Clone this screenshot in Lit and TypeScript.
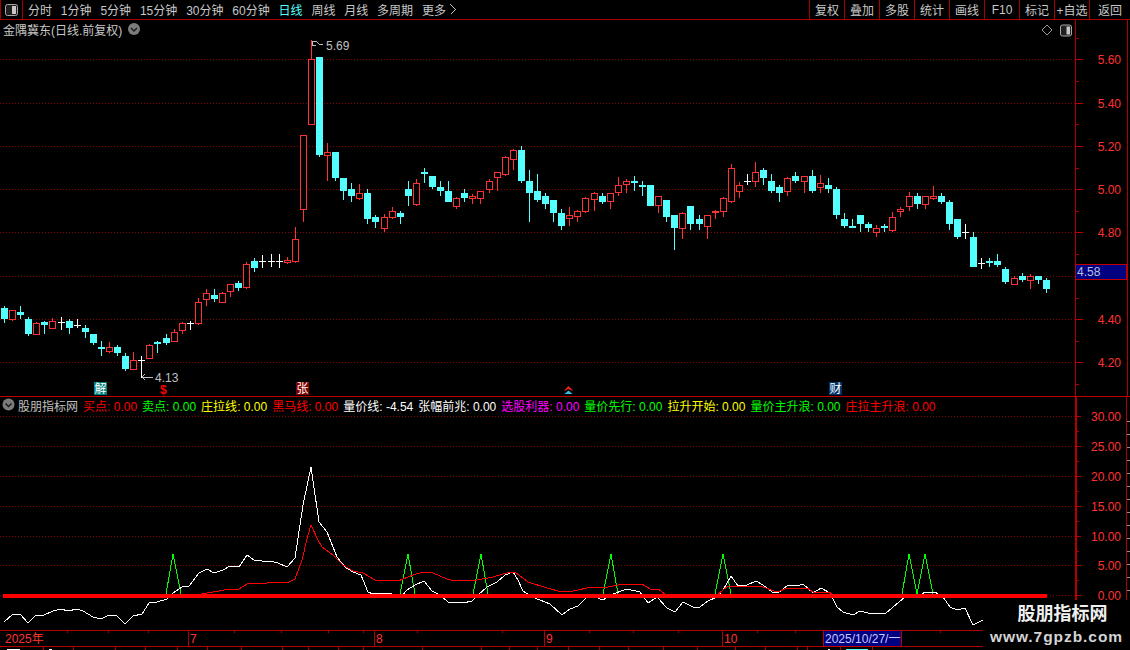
import { LitElement, html, css, svg } from "lit";
import { customElement } from "lit/decorators.js";

type Candle = [string, number, number, number, number];
const C: Candle[] = [
["C",306,308,319,323],["R",310,310,320,321],["C",306,312,315,319],["C",317,319,334,336],["R",322,323,335,335],
["C",321,322,325,334],["R",318,321,329,329],["W",317,322,323,330],["C",319,321,328,334],["W",319,325,326,328],
["C",325,328,332,338],["C",334,334,343,345],["C",341,347,349,356],["R",342,347,352,353],["C",345,347,353,356],
["C",353,356,369,371],["R",352,360,370,370],["W",356,360,361,378],["R",344,345,359,359],["C",341,342,344,353],
["C",334,338,343,345],["R",329,332,342,342],["R",322,323,331,334],["W",321,323,324,330],["R",298,302,324,325],
["R",289,293,300,306],["C",289,295,299,302],["R",292,293,303,303],["R",284,284,292,297],["C",281,283,288,291],
["R",262,264,288,289],["C",258,261,268,272],["W",255,261,262,268],["W",254,261,262,267],["W",254,261,262,268],
["R",257,260,263,264],["R",227,239,262,263],["R",135,135,210,222],["R",40,59,125,125],["C",57,57,155,157],
["R",143,152,156,181],["C",152,152,178,181],["C",178,178,191,200],["C",183,189,196,202],["R",184,193,199,200],
["C",189,193,219,224],["C",215,217,222,228],["R",214,217,229,232],["R",207,211,218,219],["C",211,213,217,224],
["C",181,189,196,206],["R",179,183,205,206],["C",168,172,174,183],["C",176,176,187,189],["C",181,187,191,196],
["C",181,191,202,202],["R",197,198,207,209],["C",189,193,198,202],["R",194,196,199,204],["R",191,191,199,204],
["R",179,181,190,193],["R",172,172,178,191],["R",156,157,175,176],["R",149,150,160,170],["C",146,150,181,183],
["C",170,181,193,222],["C",174,191,200,202],["C",193,196,204,209],["C",200,200,213,222],["C",209,213,226,230],
["R",207,215,219,226],["R",210,211,217,222],["R",197,198,212,213],["R",192,193,200,211],["C",193,196,202,204],
["R",193,193,202,209],["R",177,185,193,196],["R",179,181,185,193],["C",176,181,183,191],["C",181,185,187,196],
["C",185,185,206,206],["R",196,196,206,213],["C",200,200,217,222],["C",215,215,228,250],["R",212,213,229,239],
["C",206,206,224,230],["C",215,219,224,230],["R",215,215,227,239],["R",210,211,213,219],["R",197,198,212,217],
["R",164,168,202,203],["R",182,185,192,198],["W",174,181,182,185],["R",162,172,182,187],["C",168,170,178,185],
["C",174,181,191,193],["C",185,187,193,202],["R",177,178,192,196],["C",172,176,181,183],["R",176,176,182,193],
["C",170,176,191,193],["R",175,183,188,193],["C",178,185,189,193],["C",187,189,215,219],["C",213,219,226,228],
["C",219,226,228,228],["C",215,215,224,232],["C",222,224,228,232],["R",225,228,233,237],["C",224,226,228,232],
["R",212,217,231,232],["R",207,209,212,217],["R",192,196,207,211],["C",193,196,204,209],["R",196,196,205,209],
["R",186,196,199,200],["C",193,196,202,204],["C",200,202,224,230],["C",219,219,237,239],["W",224,232,233,239],
["C",232,237,267,267],["W",258,263,264,269],["C",258,261,263,267],["C",254,261,265,267],["C",267,269,282,284],
["R",276,278,285,285],["C",273,276,280,282],["R",274,276,281,289],["C",276,276,280,284],["C",278,280,289,293],
];

const WHITE = "4,622 13,614 20,614 28,623 36,615 44,615 53,611 61,609 68,611 77,609 83,611 93,617 101,619 109,615 117,616 125,624 133,616 142,614 149,603 157,602 167,599 173,593 182,587 189,586 199,573 207,569 214,573 223,570 230,566 239,567 247,555 254,560 262,561 270,561 278,563 287,567 295,558 303,505 311,467 319,522 327,532 337,557 345,567 353,572 361,575 368,592 373,594 390,593 397,597 400,598 407,590 415,585 424,581 432,591 440,595 448,602 463,603 472,601 478,595 487,587 497,582 505,575 513,572 518,580 523,591 532,597 540,600 550,604 562,615 570,609 578,606 587,597 595,597 603,600 610,595 627,589 640,592 648,603 657,597 667,608 675,612 683,602 693,607 700,607 708,601 717,597 723,590 731,576 738,586 747,585 756,581 763,585 772,592 778,593 788,585 797,586 803,584 813,593 821,588 830,593 837,607 843,612 853,615 860,611 868,613 886,613 905,597 917,597 925,592 935,592 943,597 950,607 957,610 965,608 973,625 983,620";
const RED = "202,594 213,592 230,589 239,589 247,584 267,583 270,582 287,583 295,579 302,560 308,535 311,525 318,540 322,547 333,555 343,565 353,571 363,573 375,580 398,581 413,575 423,572 433,573 447,579 455,581 477,580 493,577 510,572 515,572 528,582 547,588 562,592 573,591 592,587 603,588 623,584 642,584 650,589 658,589 665,594 717,595 728,586 733,587 760,586 777,592 788,588 807,588 813,592 830,592 832,595";
const SPIKES = [[166,173,181],[400,408,415],[473,481,488],[603,611,618],[715,723,731],[902,909,917],[917,925,933]];

const PRICES: [string, number][] = [["5.60",59],["5.40",103],["5.20",146],["5.00",189],["4.80",232],["4.40",319],["4.20",362]];
const LOWER: [string, number][] = [["30.00",417],["25.00",447],["20.00",477],["15.00",507],["10.00",537],["5.00",566],["0.00",596]];
const TOOLS = ["分时","1分钟","5分钟","15分钟","30分钟","60分钟","日线","周线","月线","多周期"];
const BUTTONS = ["复权","叠加","多股","统计","画线","F10","标记","+自选","返回"];
const LEGEND: [string, string, string][] = [
["买点","0.00","red"],["卖点","0.00","green"],["庄拉线","0.00","yellow"],["黑马线","0.00","red"],["量价线","-4.54","white"],
["张幅前兆","0.00","white"],["选股利器","0.00","magenta"],["量价先行","0.00","green"],["拉升开始","0.00","yellow"],
["量价主升浪","0.00","green"],["庄拉主升浪","0.00","red"],
];
const TOP_TICKS = [67,108,148,234,281,328,363,417,502,589,633,678,757,795,860,940,1010];
const BOT_TICKS = [43,73,115,145,177,207,241,282,308,338,363,422,481,509,537,568,599,628,663,697,735,765,797,807,840,872];

const chevron = (cx: number, cy: number) => svg`
  <circle class="chip" cx=${cx} cy=${cy} r="6"></circle>
  <polyline class="chip-mark" points="${cx - 3},${cy - 1} ${cx},${cy + 2} ${cx + 3},${cy - 1}"></polyline>`;

const candle = (c: Candle, i: number) => {
  const x = Math.floor(4.5 + 8.076 * i);
  const [k, wt, t, b, wb] = c;
  if (k === "R") {
    return svg`
      ${t > wt ? svg`<rect class="red-fill" x=${x} y=${wt} width="1" height=${t - wt}></rect>` : ""}
      ${wb > b ? svg`<rect class="red-fill" x=${x} y=${b} width="1" height=${wb - b}></rect>` : ""}
      <rect class="red-box" x=${x - 2.5} y=${t + 0.5} width="6" height=${Math.max(b - t - 1, 1)}></rect>`;
  }
  const cls = k === "W" ? "white-fill" : "cyan-fill";
  return svg`
    <rect class=${cls} x=${x} y=${wt} width="1" height=${wb - wt}></rect>
    <rect class=${cls} x=${x - 3} y=${t} width="7" height=${b - t}></rect>`;
};

@customElement("app-root")
export class AppRoot extends LitElement {
  static styles = css`
    :host { display: block; width: 1130px; height: 650px; }
    .root { position: relative; width: 1130px; height: 650px; overflow: hidden; background: #000; display: flex; flex-direction: column;
      font: 12px "Liberation Sans", "Noto Sans CJK SC", sans-serif; color: #c8c8c8; }
    .toolbar { height: 19px; flex: none; display: flex; align-items: center; border-bottom: 1px solid #a80000; }
    .panel-btn { width: 23px; height: 19px; box-sizing: border-box; border-left: 1px solid #a80000; border-right: 1px solid #a80000; display: flex; align-items: center; justify-content: center; }
    .tools { display: flex; gap: 8.85px; padding-left: 5px; flex: 1; white-space: nowrap; align-items: center; }
    .active { color: #54ffff; }
    .more { display: flex; align-items: center; gap: 4px; }
    .buttons { display: flex; }
    .btn { width: 35px; height: 19px; box-sizing: border-box; border-left: 1px solid #a80000; display: flex; align-items: center; justify-content: center; white-space: nowrap; }
    .btn.last { width: 41px; }
    .price { position: relative; height: 376px; flex: none; }
    .price-head { position: relative; display: flex; align-items: center; gap: 5px; height: 19px; padding-left: 3px; white-space: nowrap; }
    .chart { position: absolute; left: 0; top: 0; }
    .sep { height: 1px; flex: none; background: #c00000; }
    .lower { position: relative; height: 233px; flex: none; }
    .legend { position: relative; display: flex; align-items: center; height: 17px; gap: 5px; white-space: nowrap; padding-left: 18px; }
    .legend .name { color: #c0c0c0; }
    .red { color: #ff0000; } .green { color: #00ff00; } .yellow { color: #ffff00; } .white { color: #fff; } .magenta { color: #ff00ff; }
    .timeaxis { position: relative; height: 20px; flex: none; }
    .watermark { position: absolute; right: 0; bottom: 0; width: 147px; height: 50px; background: #000; display: flex; flex-direction: column; align-items: center; }
    .wm1 { font-size: 18px; line-height: 28px; font-weight: 700; color: #efefef; margin-left: 12px; }
    .wm2 { font-size: 15.5px; line-height: 18px; font-weight: 700; color: #d4d4d4; letter-spacing: 0.95px; }
    svg text { font: 12px "Liberation Sans", "Noto Sans CJK SC", sans-serif; }
    .grid { stroke: #8a0000; stroke-width: 1; stroke-dasharray: 1 2; shape-rendering: crispEdges; fill: none; }
    .axis { stroke: #b00000; stroke-width: 1; shape-rendering: crispEdges; fill: none; }
    .axis2 { stroke: #b00000; stroke-width: 2; shape-rendering: crispEdges; fill: none; }
    .gtick { stroke: #909090; stroke-width: 1; shape-rendering: crispEdges; }
    .plabel { fill: #ff3232; }
    .gray { fill: #c0c0c0; }
    .gray-line { stroke: #c0c0c0; fill: none; stroke-width: 1; shape-rendering: crispEdges; }
    .red-fill { fill: #ff3232; shape-rendering: crispEdges; }
    .cyan-fill { fill: #54ffff; shape-rendering: crispEdges; }
    .white-fill { fill: #fff; shape-rendering: crispEdges; }
    .red-box { fill: #000; stroke: #ff3232; stroke-width: 1; shape-rendering: crispEdges; }
    .chip { fill: #7c7c7c; }
    .chip-mark { fill: none; stroke: #1c1c1c; stroke-width: 1.5; }
    .ico-frame { fill: #202020; stroke: #a8a8a8; stroke-width: 1; }
    .ico-fill { fill: #c8c8c8; }
    .diamond { fill: none; stroke: #9a9a9a; stroke-width: 1; }
    .line-white { fill: none; stroke: #fff; stroke-width: 1; shape-rendering: crispEdges; }
    .line-red { fill: none; stroke: #ff0000; stroke-width: 1; shape-rendering: crispEdges; }
    .line-green { fill: none; stroke: #00ff00; stroke-width: 1; shape-rendering: crispEdges; }
    .thick { fill: #ff0000; shape-rendering: crispEdges; }
    .bg-teal { fill: #007f7f; } .bg-maroon { fill: #7f0000; } .bg-navy { fill: #00356b; }
    .mark-text { fill: #fff; font-size: 12px; }
    .dollar { fill: #ff0000; font-weight: 700; font-size: 12px; }
    .chev-red { fill: #e82020; } .chev-cyan { fill: #30c0e0; }
    .cur { fill: #000080; stroke: #c00000; stroke-width: 1; shape-rendering: crispEdges; }
    .cur-text { fill: #b8c0e0; }
    .date-text { fill: #c8c8ff; }
  `;

  private panelIcon() {
    return html`<svg width="13" height="12" viewBox="0 0 13 12">
      <rect class="ico-frame" x="0.5" y="0.5" width="12" height="11" rx="2"></rect>
      <rect class="ico-fill" x="7" y="2" width="4" height="8"></rect></svg>`;
  }

  private priceSvg() {
    return html`<svg class="chart" width="1130" height="376" viewBox="0 20 1130 376">
      ${[...PRICES.map((p) => p[1]), 276].map((y) => svg`<line class="grid" x1="0" x2="1075" y1=${y + 0.5} y2=${y + 0.5}></line>`)}
      <line class="axis" x1="1075.5" x2="1075.5" y1="20" y2="396"></line>
      <line class="axis" x1="1127.5" x2="1127.5" y1="20" y2="396"></line>
      ${PRICES.map(([t, y]) => svg`
        <line class="axis" x1="1076" x2="1083" y1=${y + 0.5} y2=${y + 0.5}></line>
        <text class="plabel" x="1121" y=${y + 5} text-anchor="end">${t}</text>`)}
      ${[38, 81, 124, 168, 211, 254, 298, 341, 384].map((y) => svg`<line class="axis" x1="1076" x2="1079" y1=${y + 0.5} y2=${y + 0.5}></line>`)}
      ${C.map(candle)}
      <polyline class="gray-line" points="316,45 312,45 312,41 316,41 319,44 323,44"></polyline>
      <text class="gray" x="326" y="50">5.69</text>
      <polyline class="gray-line" points="145,374 142,377 145,380"></polyline>
      <line class="gray-line" x1="142" x2="153" y1="377.5" y2="377.5"></line>
      <text class="gray" x="155" y="382">4.13</text>
      <rect class="bg-teal" x="94" y="382" width="13" height="13"></rect>
      <text class="mark-text" x="94.5" y="393">解</text>
      <text class="dollar" x="160" y="394">$</text>
      <rect class="bg-maroon" x="296" y="382" width="13" height="13"></rect>
      <text class="mark-text" x="296.5" y="393">张</text>
      <polygon class="chev-red" points="568.5,386 572.5,390 572.5,391 568.5,389 564.5,391 564.5,390"></polygon>
      <polygon class="chev-cyan" points="568.5,390.5 572.5,394 564.5,394"></polygon>
      <rect class="bg-navy" x="829" y="382" width="13" height="13"></rect>
      <text class="mark-text" x="829.5" y="393">财</text>
      <rect class="cur" x="1075.5" y="264.5" width="51" height="15"></rect>
      <text class="cur-text" x="1077" y="276">4.58</text>
      <polygon class="diamond" points="1047,25 1052,30 1047,35 1042,30"></polygon>
      <g transform="translate(1060 24.5)">
        <rect class="ico-frame" x="0.5" y="0.5" width="11" height="11" rx="2"></rect>
        <rect class="ico-fill" x="6.5" y="2" width="3.5" height="8"></rect>
      </g>
      ${chevron(134, 29)}
    </svg>`;
  }

  private lowerSvg() {
    const ticks: number[] = [];
    for (let y = 421; y < 600; y += 13) ticks.push(y);
    return html`<svg class="chart" width="1130" height="233" viewBox="0 397 1130 233">
      ${LOWER.map(([, y]) => svg`<line class="grid" x1="0" x2="1075" y1=${y - 0.5} y2=${y - 0.5}></line>`)}
      ${SPIKES.map(([a, m, b]) => svg`<polyline class="line-green" points="${a},594 ${m},554 ${b},594"></polyline>`)}
      <polyline class="line-white" points=${WHITE}></polyline>
      <polyline class="line-red" points=${RED}></polyline>
      <rect class="thick" x="3" y="593.5" width="1044" height="4"></rect>
      <line class="axis2" x1="1076" x2="1076" y1="397" y2="630"></line>
      <line class="axis" x1="1126.5" x2="1126.5" y1="397" y2="630"></line>
      ${ticks.map((y) => svg`<line class="gtick" x1="1127" x2="1130" y1=${y + 0.5} y2=${y + 0.5}></line>`)}
      ${LOWER.map(([t, y], i) => svg`
        <line class="axis" x1="1077" x2="1081" y1=${y - 0.5} y2=${y - 0.5}></line>
        ${i < 6 ? svg`<line class="axis" x1="1077" x2="1079" y1=${y + 14.5} y2=${y + 14.5}></line>` : ""}
        <text class="plabel" x="1121" y=${y + 4} text-anchor="end">${t}</text>`)}
      ${chevron(8.5, 404.5)}
    </svg>`;
  }

  private timeSvg() {
    return html`<svg class="chart" width="1130" height="20" viewBox="0 630 1130 20">
      <line class="axis" x1="0" x2="1130" y1="630.5" y2="630.5"></line>
      <line class="axis" x1="0" x2="1130" y1="646.5" y2="646.5"></line>
      ${[188, 374, 544, 722].map((x) => svg`<line class="axis" x1=${x + 0.5} x2=${x + 0.5} y1="630" y2="646"></line>`)}
      ${TOP_TICKS.map((x) => svg`<line class="axis" x1=${x + 0.5} x2=${x + 0.5} y1="631" y2="633"></line>`)}
      ${BOT_TICKS.map((x) => svg`<line class="axis" x1=${x + 0.5} x2=${x + 0.5} y1="647" y2="650"></line>`)}
      <text class="plabel" x="5" y="643">2025年</text>
      <text class="plabel" x="190" y="643">7</text>
      <text class="plabel" x="376" y="643">8</text>
      <text class="plabel" x="546" y="643">9</text>
      <text class="plabel" x="724" y="643">10</text>
      <rect class="cur" x="823.5" y="630.5" width="78" height="16"></rect>
      <text class="date-text" x="825" y="643">2025/10/27/一</text>
      <rect class="white-fill" x="7" y="649" width="13" height="1"></rect>
      <rect class="white-fill" x="49" y="649" width="3" height="1"></rect>
      <rect class="white-fill" x="828" y="649" width="2" height="1"></rect>
      <rect class="cyan-fill" x="846" y="649" width="22" height="1"></rect>
    </svg>`;
  }

  render() {
    return html`<div class="root">
      <div class="toolbar">
        <div class="panel-btn">${this.panelIcon()}</div>
        <div class="tools">
          ${TOOLS.map((t) => html`<span class=${t === "日线" ? "active" : ""}>${t}</span>`)}
          <span class="more">更多
            <svg width="6" height="11" viewBox="0 0 6 11"><polyline class="gray-line" points="0.5,0.5 5.5,5.5 0.5,10.5"></polyline></svg>
          </span>
        </div>
        <div class="buttons">
          ${BUTTONS.map((b, i) => html`<div class="btn ${i === BUTTONS.length - 1 ? "last" : ""}">${b}</div>`)}
        </div>
      </div>
      <div class="price">
        ${this.priceSvg()}
        <div class="price-head"><span>金隅冀东(日线.前复权)</span></div>
      </div>
      <div class="sep"></div>
      <div class="lower">
        ${this.lowerSvg()}
        <div class="legend">
          <span class="name">股朋指标网</span>
          ${LEGEND.map(([n, v, c]) => html`<span class=${c}>${n}: ${v}</span>`)}
        </div>
      </div>
      <div class="timeaxis">${this.timeSvg()}</div>
      <div class="watermark">
        <div class="wm1">股朋指标网</div>
        <div class="wm2">www.7gpzb.com</div>
      </div>
    </div>`;
  }
}
